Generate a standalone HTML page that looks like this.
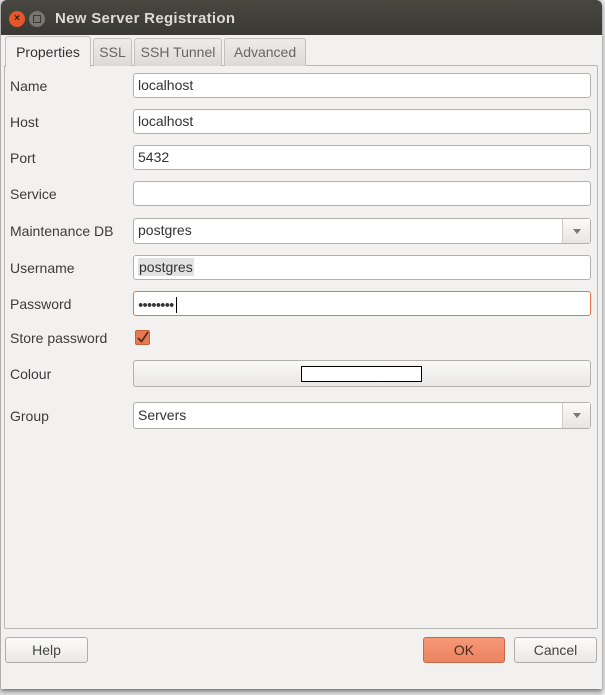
<!DOCTYPE html>
<html><head><style>
*{box-sizing:border-box}
body{margin:0;width:605px;height:695px;overflow:hidden;background:#dcdcdc;font-family:"Liberation Sans","DejaVu Sans",sans-serif;font-size:14px;color:#3c3c3c;position:relative}
.abs{position:absolute}
.win{left:1px;top:0;width:601px;height:689px;background:#f2f1f0;border-radius:6px 6px 0 0;box-shadow:0 2px 4px rgba(0,0,0,.5)}
.title{left:1px;top:0;width:601px;height:35px;background:linear-gradient(#48473f,#3a3935);border-radius:6px 6px 0 0;color:#dfdbd2;font-weight:bold;font-size:15px;padding:10px 0 0 54px;letter-spacing:.3px}
.tab{top:38px;height:28px;border:1px solid #c3c1bc;border-bottom:none;border-radius:3px 3px 0 0;background:linear-gradient(#eeecea,#dcdad6);padding:5px 0 0;text-align:center;color:#666}
.panel{left:4px;top:65px;width:594px;height:564px;border:1px solid #b9b7b2;border-radius:2px}
.lbl{left:10px}
.fld{left:133px;width:458px;height:25px;background:#fff;border:1px solid #b3b1ac;border-radius:3px;padding:3px 0 0 4px;color:#333}
.arr{right:0;top:0;width:28px;height:23px;border-left:1px solid #cfcdc8;background:linear-gradient(#fafaf9,#e6e5e3)}
.arr:after{content:"";position:absolute;left:10px;top:10px;border:4px solid transparent;border-top:5px solid #777}
.btn{top:637px;height:26px;border:1px solid #b0aeaa;border-radius:3px;background:linear-gradient(#fbfbfa,#e9e8e6);text-align:center;padding-top:4px;color:#444}
</style></head><body>
<div class="abs" style="left:602px;top:0;width:3px;height:695px;background:#e6e6e6"></div>
<div class="abs win"></div>
<div class="abs title">New Server Registration</div>
<div class="abs" style="left:9px;top:11px;width:16px;height:16px;border-radius:50%;background:#e4572a;color:#3a1a10;font-size:10px;text-align:center;line-height:16px;font-weight:bold">×</div>
<div class="abs" style="left:29px;top:11px;width:16px;height:16px;border-radius:50%;background:#77766f"><div class="abs" style="left:4px;top:4px;width:8px;height:8px;border:1px solid #3a3935"></div></div>
<div class="abs panel"></div>
<div class="abs tab" style="left:5px;width:86px;top:36px;height:31px;background:#f2f1f0;color:#333;padding-top:7px">Properties</div>
<div class="abs tab" style="left:93px;width:39px">SSL</div>
<div class="abs tab" style="left:134px;width:88px">SSH Tunnel</div>
<div class="abs tab" style="left:224px;width:82px">Advanced</div>

<div class="abs lbl" style="top:78px">Name</div><div class="abs fld" style="top:73px">localhost</div>
<div class="abs lbl" style="top:114px">Host</div><div class="abs fld" style="top:109px">localhost</div>
<div class="abs lbl" style="top:150px">Port</div><div class="abs fld" style="top:145px">5432</div>
<div class="abs lbl" style="top:186px">Service</div><div class="abs fld" style="top:181px"></div>
<div class="abs lbl" style="top:223px">Maintenance DB</div><div class="abs fld" style="top:218px;height:26px">postgres<div class="abs arr" style="height:24px"></div></div>
<div class="abs lbl" style="top:260px">Username</div><div class="abs fld" style="top:255px"><span style="background:#e2e2e2;padding:1px 1px">postgres</span></div>
<div class="abs lbl" style="top:296px">Password</div><div class="abs fld" style="top:291px;border-color:#e6764a;letter-spacing:-1px;font-size:9px;padding-top:5px">●●●●●●●●<span style="display:inline-block;width:1px;height:16px;background:#000;vertical-align:middle;margin-left:2px"></span></div>
<div class="abs lbl" style="top:330px">Store password</div>
<div class="abs" style="left:135px;top:330px;width:15px;height:15px;border-radius:2px;background:#e47b55;border:1px solid #c7603c"><svg width="13" height="13" style="position:absolute;left:0;top:0"><path d="M2 7 L5.5 10.5 L12 1" stroke="#5a2a18" stroke-width="1.8" fill="none"/></svg></div>
<div class="abs lbl" style="top:366px">Colour</div>
<div class="abs" style="left:133px;top:360px;width:458px;height:27px;border:1px solid #b3b1ac;border-radius:3px;background:linear-gradient(#f9f9f8,#e8e7e5)"><div class="abs" style="left:167px;top:5px;width:121px;height:16px;background:#fff;border:1px solid #000"></div></div>
<div class="abs lbl" style="top:408px">Group</div><div class="abs fld" style="top:402px;height:27px;padding-top:4px">Servers<div class="abs arr" style="height:25px"></div></div>

<div class="abs btn" style="left:5px;width:83px">Help</div>
<div class="abs btn" style="left:423px;width:82px;background:linear-gradient(#f69877,#ec8460);border-color:#c8694a;color:#4a2a1e">OK</div>
<div class="abs btn" style="left:514px;width:83px">Cancel</div>
</body></html>
